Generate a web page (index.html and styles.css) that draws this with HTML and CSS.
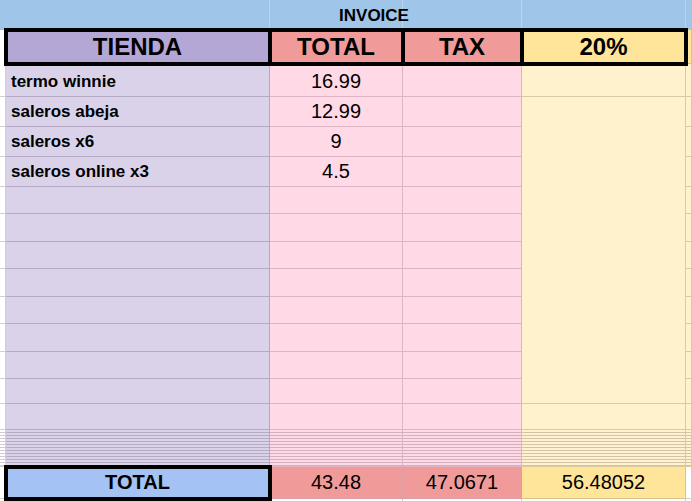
FILE: index.html
```html
<!DOCTYPE html>
<html>
<head>
<meta charset="utf-8">
<link rel="stylesheet" href="styles.css">
</head>
<body>
<div class="sheet">
  <div class="title">INVOICE</div>

  <div class="c gut hdr-gut"></div>
  <div class="c hdr h-pur box">TIENDA</div>
  <div class="c hdr h-red box">TOTAL</div>
  <div class="c hdr h-red box">TAX</div>
  <div class="c hdr h-yel box">20%</div>
  <div class="c h-yel-f"></div>

  <div class="c gut first"></div>
  <div class="c pur name first">termo winnie</div>
  <div class="c pink num first">16.99</div>
  <div class="c pink first"></div>
  <div class="c yel first"></div>
  <div class="c yel first"></div>

  <div class="c gut"></div>
  <div class="c pur name">saleros abeja</div>
  <div class="c pink num">12.99</div>
  <div class="c pink"></div>
  <div class="c yel merged"></div>
  <div class="c yel"></div>

  <div class="c gut"></div>
  <div class="c pur name">saleros x6</div>
  <div class="c pink num">9</div>
  <div class="c pink"></div>
  <div class="c yel"></div>

  <div class="c gut"></div>
  <div class="c pur name">saleros online x3</div>
  <div class="c pink num">4.5</div>
  <div class="c pink"></div>
  <div class="c yel"></div>

  <div class="c gut"></div><div class="c pur"></div><div class="c pink"></div><div class="c pink"></div><div class="c yel"></div>
  <div class="c gut"></div><div class="c pur"></div><div class="c pink"></div><div class="c pink"></div><div class="c yel"></div>
  <div class="c gut"></div><div class="c pur"></div><div class="c pink"></div><div class="c pink"></div><div class="c yel"></div>
  <div class="c gut"></div><div class="c pur"></div><div class="c pink"></div><div class="c pink"></div><div class="c yel"></div>
  <div class="c gut"></div><div class="c pur"></div><div class="c pink"></div><div class="c pink"></div><div class="c yel"></div>
  <div class="c gut"></div><div class="c pur"></div><div class="c pink"></div><div class="c pink"></div><div class="c yel"></div>
  <div class="c gut"></div><div class="c pur"></div><div class="c pink"></div><div class="c pink"></div><div class="c yel"></div>
  <div class="c gut"></div><div class="c pur"></div><div class="c pink"></div><div class="c pink"></div><div class="c yel"></div>

  <div class="c gut"></div><div class="c pur"></div><div class="c pink"></div><div class="c pink"></div><div class="c yel"></div><div class="c yel"></div>

  <div class="c gut thin"></div><div class="c pur thin"></div><div class="c pink thin"></div><div class="c pink thin"></div><div class="c yel thin"></div><div class="c yel thin"></div>

  <div class="c gut"></div>
  <div class="c f-blue box bold">TOTAL</div>
  <div class="c f-red num">43.48</div>
  <div class="c f-red num">47.0671</div>
  <div class="c f-yel num">56.48052</div>
  <div class="c gut"></div>

  <div class="c gut"></div><div class="c gut"></div><div class="c gut"></div><div class="c gut"></div><div class="c gut"></div><div class="c gut"></div>
</div>
</body>
</html>
```

FILE: styles.css
```css
html, body {
  margin: 0;
  padding: 0;
  background: #ffffff;
}

.sheet {
  width: 692px;
  height: 502px;
  overflow: hidden;
  display: grid;
  grid-template-columns: 6px 264px 133px 119px 164px 6px;
  grid-template-rows: 30px 34px 33px 30px 30px 30px 27px 28px 27px 28px 27px 28px 27px 25px 26px 37px 32px 3px;
  font-family: "Liberation Sans", Arial, sans-serif;
  color: #000;
}

.title {
  grid-column: 1 / -1;
  background-color: #9fc5e8;
  background-image:
    linear-gradient(rgba(255,255,255,0.28), rgba(255,255,255,0.28)),
    linear-gradient(rgba(255,255,255,0.28), rgba(255,255,255,0.28)),
    linear-gradient(rgba(255,255,255,0.28), rgba(255,255,255,0.28)),
    linear-gradient(rgba(255,255,255,0.28), rgba(255,255,255,0.28));
  background-size: 1px 100%;
  background-repeat: no-repeat;
  background-position: 269px 0, 402px 0, 521px 0, 685px 0;
  display: flex;
  align-items: center;
  justify-content: center;
  padding-left: 56px;
  padding-top: 2px;
  box-sizing: border-box;
  font-weight: bold;
  font-size: 17px;
}

.c {
  box-sizing: border-box;
  display: flex;
  align-items: center;
  min-width: 0;
  border-right: 1px solid #cfcfcf;
  border-bottom: 1px solid #cfcfcf;
  white-space: nowrap;
}

.first { padding-top: 3px; }

.gut { background: #ffffff; border-color: #cfcfcf; }
.hdr-gut { border-bottom-color: transparent; }

.hdr {
  justify-content: center;
  font-weight: bold;
  font-size: 24px;
  padding-top: 1px;
}
.h-pur { background: #b4a7d6; }
.h-red { background: #f09b99; }
.h-yel { background: #ffe599; }
.h-yel-f { background: #ffe599; border-color: #d8c48a; }

.box {
  position: relative;
  z-index: 1;
  outline: 4px solid #000;
  outline-offset: -2px;
}

.pur { background: #d9d2e9; border-color: #b4a8c4; }
.pink { background: #ffd9e6; border-color: #dcb4c3; }
.yel { background: #fff2cc; border-color: #dbc9a3; }

.merged { grid-row: span 11; }

.thin {
  background-image: repeating-linear-gradient(to bottom, transparent 0, transparent 2px, rgba(90, 70, 90, 0.28) 2px, rgba(90, 70, 90, 0.28) 3px);
}

.name {
  font-weight: bold;
  font-size: 17px;
  padding-left: 5px;
}

.num {
  justify-content: center;
  font-size: 20px;
}

.bold {
  justify-content: center;
  font-weight: bold;
  font-size: 20px;
}

.f-blue { background: #a4c2f4; }
.f-red { background: #f09b99; border-color: #d9a0a8; }
.f-yel { background: #ffe599; border-color: #d8c48a; }
```
